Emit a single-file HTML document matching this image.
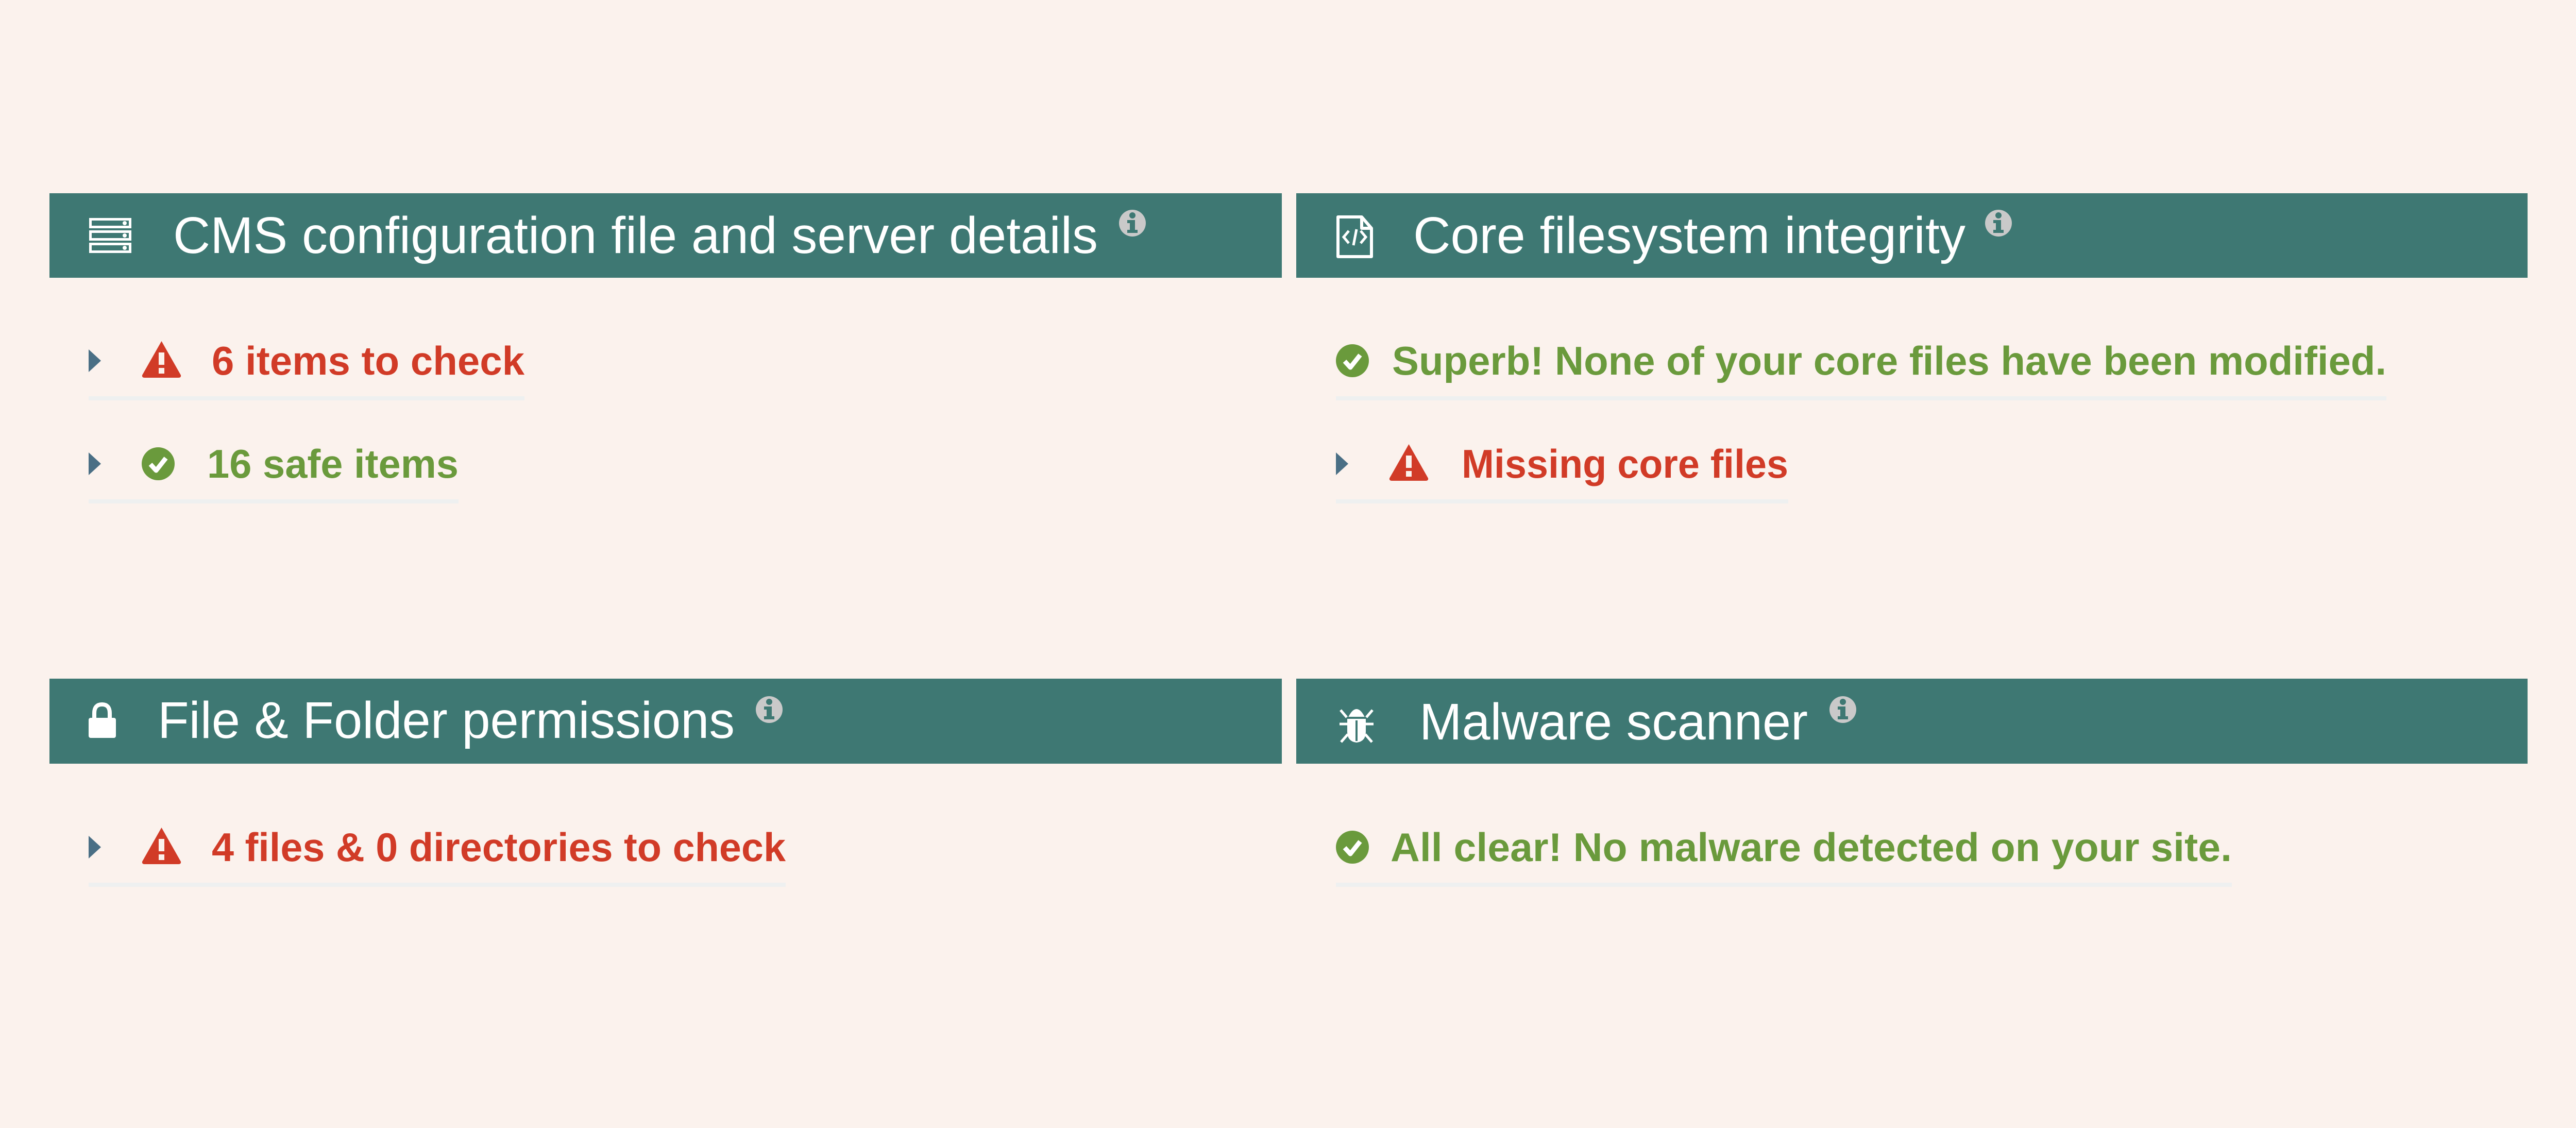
<!DOCTYPE html>
<html><head><meta charset="utf-8"><style>
html,body{margin:0;padding:0;background:#fbf2ed;}
svg{display:block}
</style></head><body>
<svg width="5003" height="2189" viewBox="0 0 5003 2189" xmlns="http://www.w3.org/2000/svg" font-family="Liberation Sans, sans-serif">
<rect width="5003" height="2189" fill="#fbf2ed"/>
<defs>
<g id="warn"><path d="M37.5 0 L75 66 Q76 71 70 71 L5 71 Q-1 71 0 66 Z" fill="#d13b27"/><rect x="32" y="22" width="11" height="24" fill="#fbf2ed"/><rect x="32" y="52" width="11" height="11" fill="#fbf2ed"/></g>
<g id="ok"><circle cx="32" cy="32" r="32" fill="#6a9a3c"/><path d="M17 33 L28 45 L47 21" fill="none" stroke="#fff" stroke-width="9" stroke-linejoin="round"/></g>
<g id="arr"><path d="M0 0 L24 22 L0 44 Z" fill="#4a6f85"/></g>
<g id="info"><circle cx="0" cy="0" r="26" fill="#c9c9c9"/><rect x="-5" y="-6" width="10" height="24" fill="#3e7873"/><rect x="-10" y="-6" width="8" height="6" fill="#3e7873"/><rect x="-10" y="13" width="20" height="6" fill="#3e7873"/><circle cx="0" cy="-15" r="6" fill="#3e7873"/></g>
</defs>

<rect x="96" y="375" width="2392" height="164" fill="#3e7873"/>
<rect x="2516" y="375" width="2390" height="164" fill="#3e7873"/>
<rect x="96" y="1317" width="2392" height="165" fill="#3e7873"/>
<rect x="2516" y="1317" width="2390" height="165" fill="#3e7873"/>

<!-- server icon -->
<g fill="none" stroke="#fff" stroke-width="5">
<rect x="175.5" y="425.5" width="77" height="15"/><rect x="175.5" y="449.5" width="77" height="15"/><rect x="175.5" y="473.5" width="77" height="15"/>
</g>
<g fill="#fff"><circle cx="242" cy="433" r="4"/><circle cx="242" cy="457" r="4"/><circle cx="242" cy="481" r="4"/></g>
<text x="336" y="491" font-size="100" fill="#fff" textLength="1795" lengthAdjust="spacingAndGlyphs">CMS configuration file and server details</text>
<use href="#info" x="2198" y="433"/>

<path d="M2597 421 L2643 421 L2662 443 L2662 498 L2597 498 Z M2643 421 L2643 443 L2662 443" fill="none" stroke="#fff" stroke-width="6" stroke-linejoin="round"/>
<path d="M2618 448 L2608 460 L2618 472 M2641 448 L2651 460 L2641 472 M2633 445 L2627 476" fill="none" stroke="#fff" stroke-width="5"/>
<text x="2743" y="491" font-size="100" fill="#fff" textLength="1072" lengthAdjust="spacingAndGlyphs">Core filesystem integrity</text>
<use href="#info" x="3879" y="433"/>

<path d="M183 1395 L183 1384 Q183 1367 198 1367 Q213 1367 213 1384 L213 1395" fill="none" stroke="#fff" stroke-width="8"/>
<rect x="172" y="1393" width="53" height="39" rx="4" fill="#fff"/>
<text x="306" y="1432" font-size="100" fill="#fff" textLength="1120" lengthAdjust="spacingAndGlyphs">File &amp; Folder permissions</text>
<use href="#info" x="1493" y="1377"/>

<g fill="#fff" stroke="#fff">
<path d="M2619 1390 Q2633 1364 2647 1390 Z" stroke-width="2"/>
<path d="M2616 1396 L2650 1396 L2650 1420 Q2650 1438 2633 1440 Q2616 1438 2616 1420 Z" stroke-width="2"/>
<path d="M2600 1405 L2666 1405 M2614 1392 L2602 1378 M2652 1392 L2664 1378 M2616 1425 L2603 1440 M2650 1425 L2663 1440" fill="none" stroke-width="5"/>
</g>
<rect x="2631" y="1398" width="4" height="40" fill="#3e7873"/>
<text x="2755" y="1435" font-size="100" fill="#fff" textLength="754" lengthAdjust="spacingAndGlyphs">Malware scanner</text>
<use href="#info" x="3577" y="1377"/>

<g font-weight="bold" font-size="78">
<use href="#arr" x="172" y="678"/><use href="#warn" x="276" y="662"/>
<text x="411" y="727" fill="#d13b27" textLength="607" lengthAdjust="spacingAndGlyphs">6 items to check</text>
<rect x="172" y="769" width="846" height="8" fill="#eef0f0"/>

<use href="#arr" x="172" y="878"/><use href="#ok" x="275" y="868"/>
<text x="402" y="927" fill="#6a9a3c" textLength="488" lengthAdjust="spacingAndGlyphs">16 safe items</text>
<rect x="172" y="969" width="718" height="8" fill="#eef0f0"/>

<use href="#arr" x="172" y="1622"/><use href="#warn" x="276" y="1606"/>
<text x="411" y="1671" fill="#d13b27" textLength="1114" lengthAdjust="spacingAndGlyphs">4 files &amp; 0 directories to check</text>
<rect x="172" y="1713" width="1353" height="8" fill="#eef0f0"/>

<use href="#ok" x="2593" y="668"/>
<text x="2702" y="727" fill="#6a9a3c" textLength="1930" lengthAdjust="spacingAndGlyphs">Superb! None of your core files have been modified.</text>
<rect x="2593" y="769" width="2039" height="8" fill="#eef0f0"/>

<use href="#arr" x="2593" y="878"/><use href="#warn" x="2697" y="862"/>
<text x="2837" y="927" fill="#d13b27" textLength="634" lengthAdjust="spacingAndGlyphs">Missing core files</text>
<rect x="2593" y="969" width="878" height="8" fill="#eef0f0"/>

<use href="#ok" x="2593" y="1612"/>
<text x="2699" y="1671" fill="#6a9a3c" textLength="1633" lengthAdjust="spacingAndGlyphs">All clear! No malware detected on your site.</text>
<rect x="2593" y="1713" width="1739" height="8" fill="#eef0f0"/>
</g>
</svg>
</body></html>
